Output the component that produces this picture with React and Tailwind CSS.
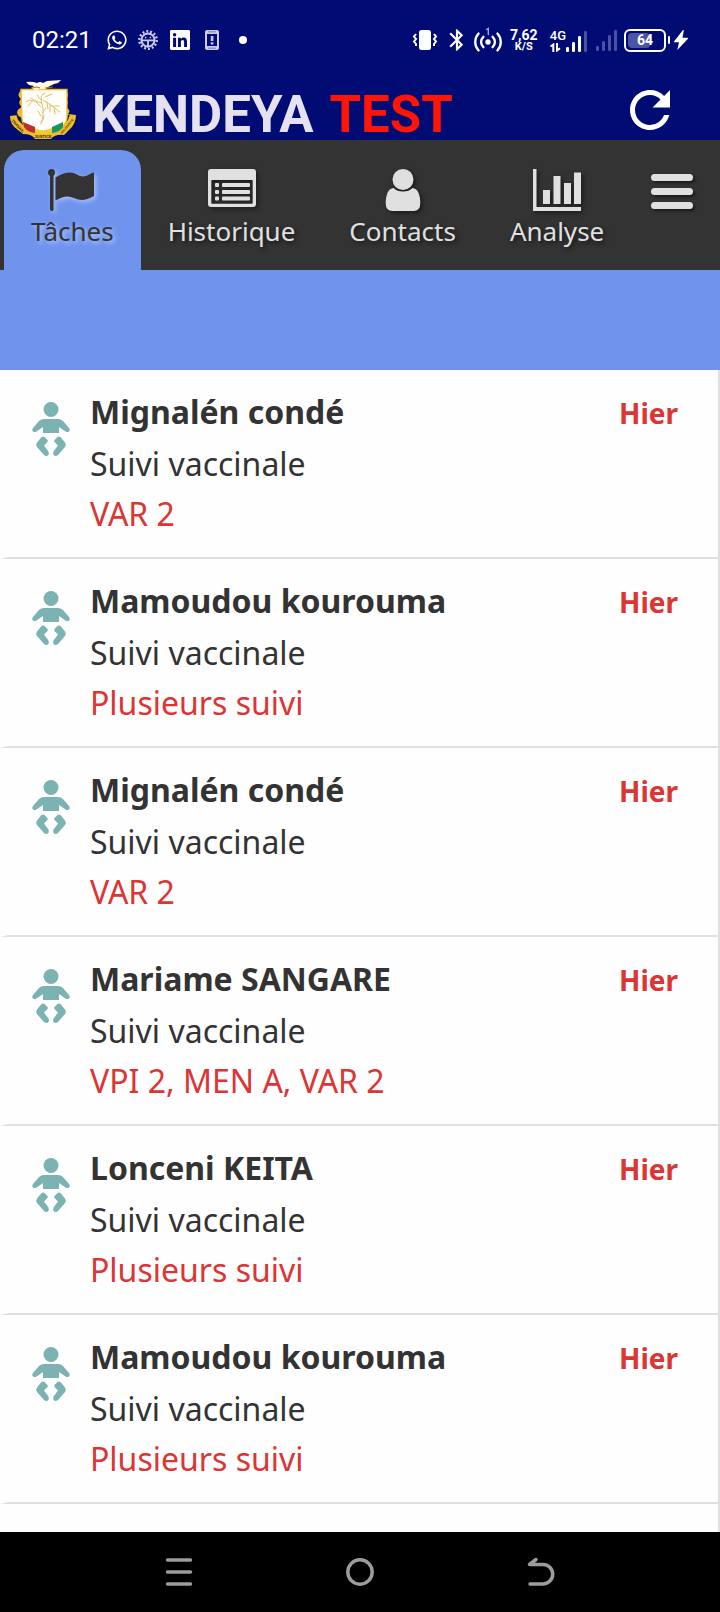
import React from "react";
import { FaWhatsapp } from "react-icons/fa";
import { MdBluetooth, MdRefresh } from "react-icons/md";

const tasks = [
  { name: "Mignalén condé", detail: "VAR 2" },
  { name: "Mamoudou kourouma", detail: "Plusieurs suivi" },
  { name: "Mignalén condé", detail: "VAR 2" },
  { name: "Mariame SANGARE", detail: "VPI 2, MEN A, VAR 2" },
  { name: "Lonceni KEITA", detail: "Plusieurs suivi" },
  { name: "Mamoudou kourouma", detail: "Plusieurs suivi" },
];

function GearIcon() {
  return (
    <svg width="20" height="20" viewBox="0 0 22 22" fill="none" stroke="#c9cbec" aria-hidden="true">
      <circle cx="11" cy="11" r="9.6" strokeWidth="2.6" strokeDasharray="2.2 2.1" />
      <circle cx="11" cy="11" r="7.2" strokeWidth="2.2" />
      <path d="M4 11.5h14M11 12v7" strokeWidth="2" />
      <path d="M7.600 8.200h1.600M12.800 8.200h1.600" strokeWidth="1.6" />
    </svg>
  );
}

function LinkedinIcon() {
  return (
    <svg width="20" height="20" viewBox="0 0 20 20" aria-hidden="true">
      <rect width="20" height="20" rx="1.4" fill="#fff" />
      <g fill="#010b74">
        <circle cx="4.6" cy="4.8" r="1.7" />
        <path d="M3.1 7.7h3v9.2h-3zM8 7.7h2.8V9c.5-.9 1.5-1.5 2.9-1.5 2.6 0 3.3 1.7 3.3 4.2v5.2h-2.9v-4.7c0-1.2-.2-2.3-1.5-2.3s-1.7 1-1.7 2.2v4.8H8z" />
      </g>
    </svg>
  );
}

function PhoneAlertIcon() {
  return (
    <svg width="14" height="20" viewBox="0 0 14 20" aria-hidden="true">
      <rect width="14" height="20" rx="2" fill="#c9cbec" />
      <path d="M2 4h10v12H2z" fill="#010b74" />
      <path d="M3 1.5h8v.8H3zM3 17.7h8v.8H3z" fill="#5d62a8" />
      <path d="M5.8 6h2.6v5H5.8zM5.8 12.2h2.6v2.3H5.8z" fill="#c9cbec" />
    </svg>
  );
}

function VibrateIcon() {
  return (
    <svg width="26" height="20" viewBox="0 0 26 20" fill="none" aria-hidden="true">
      <rect x="7" width="12" height="20" rx="2.5" fill="#fff" />
      <path d="M4 4L2 6.500 4 9 2 11.500 4 14v2M22 4l2 2.500L22 9l2 2.500L22 14v2" stroke="#fff" strokeWidth="2" />
    </svg>
  );
}

function HotspotIcon() {
  return (
    <svg width="28" height="26" viewBox="0 0 28 26" fill="none" stroke="#fff" strokeWidth="2.3" strokeLinecap="round" aria-hidden="true">
      <circle cx="14" cy="15" r="2.7" fill="#fff" stroke="none" />
      <path d="M9.400 9.800a7 7 0 0 0 0 10.400M18.600 9.800a7 7 0 0 1 0 10.400M4.600 6.500a12.400 12.400 0 0 0 0 17M23.400 6.500a12.400 12.400 0 0 1 0 17" />
      <path d="M12.5 2.500l1.800-1V7.500" stroke="#a5a8d5" strokeWidth="1.4" />
    </svg>
  );
}

function SignalBars({ level }) {
  return (
    <svg width="22" height="22" viewBox="0 0 22 22" aria-hidden="true">
      {[5, 10, 16, 21].map((h, i) => (
        <rect key={h} x={i * 6} y={22 - h} width="3" height={h} rx="1.3" fill={i < level ? "#fff" : "#4a51a0"} />
      ))}
    </svg>
  );
}

function DataArrows() {
  return (
    <svg width="11" height="9" viewBox="0 0 11 9" fill="none" stroke="#fff" strokeWidth="2" aria-hidden="true">
      <path d="M.5 3.5L3.3 1.500V9M7 0v7.500l3-2.300" />
    </svg>
  );
}

function BatteryIcon() {
  return (
    <span className="flex items-center">
      <span className="relative flex h-[23px] w-[42px] items-center justify-center rounded-md border-2 border-white">
        <span className="absolute inset-y-0.5 left-0.5 w-[22px] rounded-sm bg-[#4d54a3]" />
        <span className="relative text-sm leading-4 font-bold">64</span>
      </span>
      <span className="ml-0.5 h-2 w-0.5 rounded-sm bg-white" />
    </span>
  );
}

function BoltIcon() {
  return (
    <svg width="14" height="20" viewBox="0 0 14 20" fill="#fff" aria-hidden="true">
      <path d="M9 0L0 11.5q-.3.7.5.8H5L3.300 20 14 8.700q.3-.9-.6-1H8.500L9.800.5Q9.600-.3 9 0z" />
    </svg>
  );
}

function Crest() {
  return (
    <svg width="66" height="60" viewBox="0 0 66 60" role="img" aria-label="Armoiries de la Guinée">
      <path d="M11 10Q6 15 11 19 7 23 12 27 5 30 8 35L0 36Q0 45 8 50L13 54Q22 54 25 59H41Q45 54 54 55L59 50Q66 44 66 35L58 34Q62 30 55 27 60 23 56 19 60 15 56 10L48 48H18z" fill="#efbd27" />
      <path d="M6 34l7 5v6l-5-5zM60 34l-7 4v7l5-5z" fill="#17194f" />
      <path d="M11 9.500H57V38Q56 48 43 49L34 54 24 49Q12 47 12 39z" fill="#fffdf7" stroke="#efbd27" strokeWidth="1.3" />
      <path d="M13 42l12 5v6q-8-1-11-6z" fill="#bd2b35" />
      <path d="M25 48.500Q34 52 42 48v5q-8 2-17 0z" fill="#f4cc3a" />
      <path d="M42 47l11-5v5q-3 5-11 6z" fill="#169466" />
      <path d="M31 44Q35 33 32 24T35 13M31 43q3-3 3-7M31 36l-3-5M32 33l4-5M31 27l-5-5M32 23L20 20l-4 2M26 21l-5-3M33 20l9 6 8 6M40 24v8M44 28l1 6M42 26l7 0M35 17l7-3M31 20l-4-5M37 22l1 7M23 20l-5 6" stroke="#dfc16c" strokeWidth="1" fill="none" strokeLinecap="round" />
      <path d="M16 2q6-1 11 1 3-2 6 0l4-2 14-1-3 3-4 1-6 3q-2 3-6 2l-7 1-4-2 3-2-5-1z" fill="#fff8df" />
      <path d="M22 8q5-2 8 0M35 8l8-1" stroke="#8d7635" strokeWidth="1" fill="none" />
      <g fill="#3b2d08" fontFamily="Liberation Sans, sans-serif" fontWeight="700">
        <text transform="translate(1 41) rotate(46)" fontSize="4">TRAVAIL</text>
        <text x="33" y="58" textAnchor="middle" fontSize="4">JUSTICE</text>
        <text transform="translate(52 54) rotate(-50)" fontSize="3">SOLIDARITE</text>
      </g>
    </svg>
  );
}

function FlagIcon() {
  return (
    <svg width="48" height="42" viewBox="0 0 48 42" fill="currentColor" aria-hidden="true">
      <circle cx="3.500" cy="3.500" r="3.500" />
      <path d="M2 5h3.500v35.500q0 1.500-1.500 1.500t-2-1.500zM7.500 8.500Q19 1.500 27 4.500q6 4 11 2.500L45 3.500Q46 3 46 4.500V27q-7 4-12 4-4 0-8-2-8-4-17.500 2-1 .5-1-.5z" />
    </svg>
  );
}

function ListIcon() {
  return (
    <svg width="48" height="42" viewBox="0 0 48 42" fill="currentColor" aria-hidden="true">
      <path fillRule="evenodd" d="M3 0H45q3 0 3 3V35q0 3-3 3H3q-3 0-3-3V3Q0 0 3 0zM4 11q-.7 0-.7.7V34q0 .7.7.7H44q.7 0 .7-.7V11.700Q44.700 11 44 11z" />
      {[14, 21, 27.5].map((y) => (
        <g key={y}>
          <rect x="7" y={y} width="4" height="4" rx="1" />
          <rect x="14" y={y} width="28" height="4" rx="1" />
        </g>
      ))}
    </svg>
  );
}

function PersonIcon() {
  return (
    <svg width="36" height="42" viewBox="0 0 36 42" fill="currentColor" aria-hidden="true">
      <circle cx="18" cy="10.500" r="10.500" />
      <path d="M8.500 19Q12 22.500 18 22.500T27.500 19Q35 20 35.300 34 35.300 42 28.500 42H7.500Q.7 42 .7 34 1 20 8.500 19z" />
    </svg>
  );
}

function ChartIcon() {
  return (
    <svg width="48" height="42" viewBox="0 0 48 42" fill="currentColor" aria-hidden="true">
      <path d="M0 0h3.500v38H48v4H0zM10 21h7v14h-7zM20.500 7h7v28h-7zM31 14h7v21h-7zM41 3.500h7V35h-7z" />
    </svg>
  );
}

function BabyIcon() {
  return (
    <svg width="38" height="56" viewBox="0 0 38 56" fill="#7db2b3" aria-hidden="true">
      <circle cx="19" cy="8.500" r="7.500" />
      <path d="M12 18H26Q29 18 31 20l6 7q1.500 2 0 3.500-1.500 1-3.500 0L27 26v6H11v-6L4.500 30.500q-2 1-3.500 0Q-.5 29 1 27l6-7Q9 18 12 18z" />
      <path d="M9.500 36q1.500-1.200 3 0l3 3q1 1.500-.5 2.500l-3 3 4.500 6q1 3-.5 4-2 1-4-.5L5 46q-1.500-2.500 0-4.500zM28.500 36q-1.500-1.200-3 0l-3 3q-1 1.500.5 2.500l3 3-4.500 6q-1 3 .5 4 2 1 4-.5L33 46q1.500-2.500 0-4.500z" />
    </svg>
  );
}

const tabs = [
  { label: "Tâches", Icon: FlagIcon, active: true },
  { label: "Historique", Icon: ListIcon },
  { label: "Contacts", Icon: PersonIcon },
  { label: "Analyse", Icon: ChartIcon },
];

export default function App() {
  return (
    <div className="flex min-h-screen flex-col bg-[#fefefe] font-['Noto_Sans',sans-serif] text-[#333]">
      <header className="bg-[#010b74] font-[Roboto,sans-serif] text-white">
        <div className="flex h-20 items-center justify-between px-8">
          <div className="flex items-center">
            <time className="text-2xl">02:21</time>
            <FaWhatsapp className="ml-3.5 size-[22px]" />
            <span className="ml-2.5"><GearIcon /></span>
            <span className="ml-3"><LinkedinIcon /></span>
            <span className="ml-[15px]"><PhoneAlertIcon /></span>
            <span className="ml-5 size-2 rounded-full bg-white" />
          </div>
          <div className="flex items-center">
            <VibrateIcon />
            <MdBluetooth className="ml-1.5 size-[26px]" />
            <span className="ml-1"><HotspotIcon /></span>
            <div className="ml-2 flex w-7 flex-col items-center font-bold">
              <span className="text-sm leading-[14px]">7,62</span>
              <span className="text-[11px] leading-[10px]">K/S</span>
            </div>
            <div className="ml-3 flex items-end">
              <span className="flex flex-col">
                <span className="text-[13px] leading-[14px] font-medium">4G</span>
                <DataArrows />
              </span>
              <SignalBars level={3} />
            </div>
            <span className="mr-1.5 ml-2"><SignalBars level={0} /></span>
            <BatteryIcon />
            <span className="ml-1"><BoltIcon /></span>
          </div>
        </div>
        <div className="flex h-[60px] items-center pr-10 pl-2.5">
          <Crest />
          <h1 className="ml-4 flex flex-1 gap-4 pt-2.5 text-[51px] leading-[50px] font-bold text-[#e6e1ee]">
            <span>KENDEYA</span>
            <span className="text-[#ff1406]">TEST</span>
          </h1>
          <button type="button" aria-label="Actualiser">
            <MdRefresh className="size-[60px]" />
          </button>
        </div>
      </header>

      <nav className="flex h-[130px] bg-[#333] pt-2.5 pl-1" aria-label="Navigation principale">
        {tabs.map(({ label, Icon, active }) => (
          <a
            key={label}
            href="#"
            aria-current={active ? "page" : undefined}
            className={
              active
                ? "flex flex-col items-center rounded-t-[20px] bg-[#7094ee] px-[27px] pt-[19px] text-[#333] [text-shadow:2px_2px_4px_rgba(255,255,255,0.5)] [&_svg]:drop-shadow-[2px_2px_2px_rgba(255,255,255,0.4)]"
                : "flex flex-col items-center px-[27px] pt-[19px] text-[#e0e0e0] [text-shadow:2px_2px_4px_rgba(0,0,0,0.6)] [&_svg]:drop-shadow-[2px_2px_2px_rgba(0,0,0,0.5)]"
            }
          >
            <Icon />
            <span className="mt-0.5 text-[26px] leading-9">{label}</span>
          </a>
        ))}
        <button type="button" aria-label="Menu" className="ml-5 flex flex-col gap-[7px] self-start pt-6">
          <span className="h-[7px] w-[42px] rounded-sm bg-[#e0e0e0] shadow-[2px_2px_3px_rgba(0,0,0,0.5)]" />
          <span className="h-[7px] w-[42px] rounded-sm bg-[#e0e0e0] shadow-[2px_2px_3px_rgba(0,0,0,0.5)]" />
          <span className="h-[7px] w-[42px] rounded-sm bg-[#e0e0e0] shadow-[2px_2px_3px_rgba(0,0,0,0.5)]" />
        </button>
      </nav>
      <div className="h-[100px] bg-[#7094ee]" />

      <main className="flex-1 border-r-2 border-[#e0e0e0]">
        <ul>
          {tasks.map((task, i) => (
            <li key={i} className="border-b-2 border-l-8 border-b-[#e0e0e0] border-l-transparent">
              <a href="#" className="flex items-start pt-[17px] pr-10 pb-[18px] pl-6">
                <span className="pt-3.5"><BabyIcon /></span>
                <span className="ml-5 flex flex-1 flex-col text-[32px] leading-[50px]">
                  <strong className="mb-0.5 font-bold">{task.name}</strong>
                  <span>Suivi vaccinale</span>
                  <span className="text-[#db3534]">{task.detail}</span>
                </span>
                <span className="text-[28px] leading-[52px] font-bold text-[#db3534]">Hier</span>
              </a>
            </li>
          ))}
        </ul>
      </main>

      <footer className="flex h-20 items-center justify-center gap-[153px] bg-black">
        <button type="button" aria-label="Applications récentes">
          <svg width="28" height="30" viewBox="0 0 28 30" stroke="#9c9c9c" strokeWidth="3.5" strokeLinecap="round" aria-hidden="true">
            <path d="M2.500 3h23M2.500 15h23M2.500 27h23" />
          </svg>
        </button>
        <button type="button" aria-label="Accueil">
          <svg width="28" height="28" viewBox="0 0 28 28" fill="none" stroke="#9c9c9c" strokeWidth="3.5" aria-hidden="true">
            <circle cx="14" cy="14" r="12.2" />
          </svg>
        </button>
        <button type="button" aria-label="Retour">
          <svg width="28" height="30" viewBox="0 0 28 30" fill="none" stroke="#9c9c9c" strokeWidth="3.5" strokeLinecap="round" strokeLinejoin="round" aria-hidden="true">
            <path d="M9 2.500L2.500 7.500H16a9.700 9.700 0 0 1 0 19.400H3" />
          </svg>
        </button>
      </footer>
    </div>
  );
}
